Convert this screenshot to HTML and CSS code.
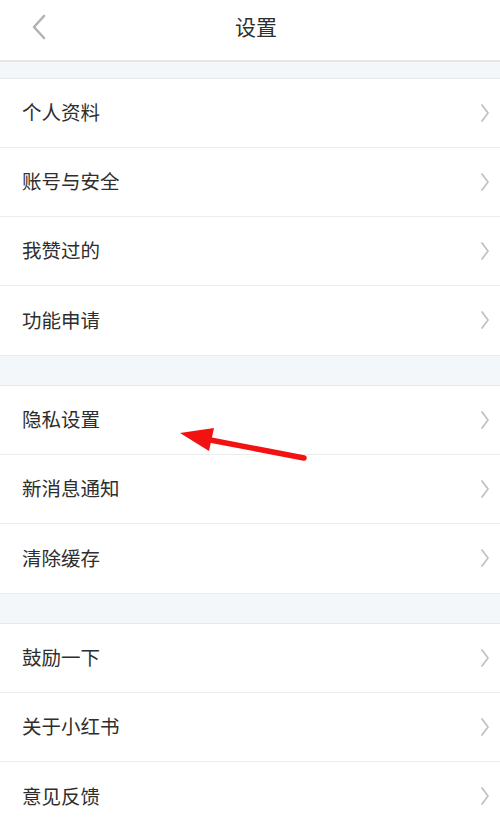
FILE: index.html
```html
<!DOCTYPE html>
<html lang="zh">
<head>
<meta charset="utf-8">
<title>设置</title>
<link rel="stylesheet" href="styles.css">
</head>
<body>
<div class="page">
  <header class="topbar">
    <svg class="back" width="16" height="26" viewBox="0 0 16 26"><path d="M13 2 L3 13 L13 24" fill="none" stroke="#b3b3b3" stroke-width="2.6" stroke-linecap="round" stroke-linejoin="round"/></svg>
    <h1 class="title">设置</h1>
  </header>
  <div class="band band-first"></div>
  <ul class="group">
    <li class="row"><span>个人资料</span><svg class="chev" width="10" height="20" viewBox="0 0 10 20"><path d="M2 2 L8 10 L2 18" fill="none" stroke="#c2c2c2" stroke-width="1.8" stroke-linecap="round" stroke-linejoin="round"/></svg></li>
    <li class="row"><span>账号与安全</span><svg class="chev" width="10" height="20" viewBox="0 0 10 20"><path d="M2 2 L8 10 L2 18" fill="none" stroke="#c2c2c2" stroke-width="1.8" stroke-linecap="round" stroke-linejoin="round"/></svg></li>
    <li class="row"><span>我赞过的</span><svg class="chev" width="10" height="20" viewBox="0 0 10 20"><path d="M2 2 L8 10 L2 18" fill="none" stroke="#c2c2c2" stroke-width="1.8" stroke-linecap="round" stroke-linejoin="round"/></svg></li>
    <li class="row"><span>功能申请</span><svg class="chev" width="10" height="20" viewBox="0 0 10 20"><path d="M2 2 L8 10 L2 18" fill="none" stroke="#c2c2c2" stroke-width="1.8" stroke-linecap="round" stroke-linejoin="round"/></svg></li>
  </ul>
  <div class="band"></div>
  <ul class="group">
    <li class="row"><span>隐私设置</span><svg class="chev" width="10" height="20" viewBox="0 0 10 20"><path d="M2 2 L8 10 L2 18" fill="none" stroke="#c2c2c2" stroke-width="1.8" stroke-linecap="round" stroke-linejoin="round"/></svg></li>
    <li class="row"><span>新消息通知</span><svg class="chev" width="10" height="20" viewBox="0 0 10 20"><path d="M2 2 L8 10 L2 18" fill="none" stroke="#c2c2c2" stroke-width="1.8" stroke-linecap="round" stroke-linejoin="round"/></svg></li>
    <li class="row"><span>清除缓存</span><svg class="chev" width="10" height="20" viewBox="0 0 10 20"><path d="M2 2 L8 10 L2 18" fill="none" stroke="#c2c2c2" stroke-width="1.8" stroke-linecap="round" stroke-linejoin="round"/></svg></li>
  </ul>
  <div class="band"></div>
  <ul class="group">
    <li class="row"><span>鼓励一下</span><svg class="chev" width="10" height="20" viewBox="0 0 10 20"><path d="M2 2 L8 10 L2 18" fill="none" stroke="#c2c2c2" stroke-width="1.8" stroke-linecap="round" stroke-linejoin="round"/></svg></li>
    <li class="row"><span>关于小红书</span><svg class="chev" width="10" height="20" viewBox="0 0 10 20"><path d="M2 2 L8 10 L2 18" fill="none" stroke="#c2c2c2" stroke-width="1.8" stroke-linecap="round" stroke-linejoin="round"/></svg></li>
    <li class="row"><span>意见反馈</span><svg class="chev" width="10" height="20" viewBox="0 0 10 20"><path d="M2 2 L8 10 L2 18" fill="none" stroke="#c2c2c2" stroke-width="1.8" stroke-linecap="round" stroke-linejoin="round"/></svg></li>
  </ul>
  <svg class="arrow" width="500" height="826" viewBox="0 0 500 826">
    <line x1="304" y1="458" x2="205" y2="439" stroke="#f21212" stroke-width="5.5" stroke-linecap="round"/>
    <polygon points="180,433 214,428 209,451" fill="#f21212"/>
  </svg>
</div>
</body>
</html>
```

FILE: styles.css
```css
html, body {
  margin: 0;
  padding: 0;
  background: #ffffff;
}
.page {
  position: relative;
  width: 500px;
  height: 826px;
  overflow: hidden;
  font-family: "Noto Sans CJK SC", "Noto Sans", sans-serif;
  color: #333333;
  background: #ffffff;
}
.topbar {
  height: 62px;
  box-sizing: border-box;
  display: flex;
  align-items: center;
  justify-content: center;
  position: relative;
  border-bottom: 2px solid #e4e6e8;
  background: #ffffff;
}
.back {
  position: absolute;
  left: 31px;
  top: 14px;
}
.title {
  margin: 0;
  font-size: 21px;
  font-weight: 400;
  color: #2e2e2e;
  padding-left: 12px;
  margin-top: -8px;
}
.band {
  height: 30px;
  background: #f4f7fa;
  border-top: 1px solid #e9ebed;
  box-sizing: border-box;
}
.band-first {
  height: 16px;
  border-top: none;
}
.group {
  list-style: none;
  margin: 0;
  padding: 0;
  border-top: 1px solid #e6e8ea;
}
.row {
  height: 69px;
  box-sizing: border-box;
  display: flex;
  align-items: center;
  justify-content: space-between;
  padding: 0 10px 3px 22px;
  border-bottom: 1px solid #ececec;
  font-size: 19.5px;
  color: #2e2e2e;
}
.group .row:last-child {
  border-bottom: none;
}
.chev {
  display: block;
  margin-top: 2px;
}
.arrow {
  position: absolute;
  left: 0;
  top: 0;
  pointer-events: none;
}
```
